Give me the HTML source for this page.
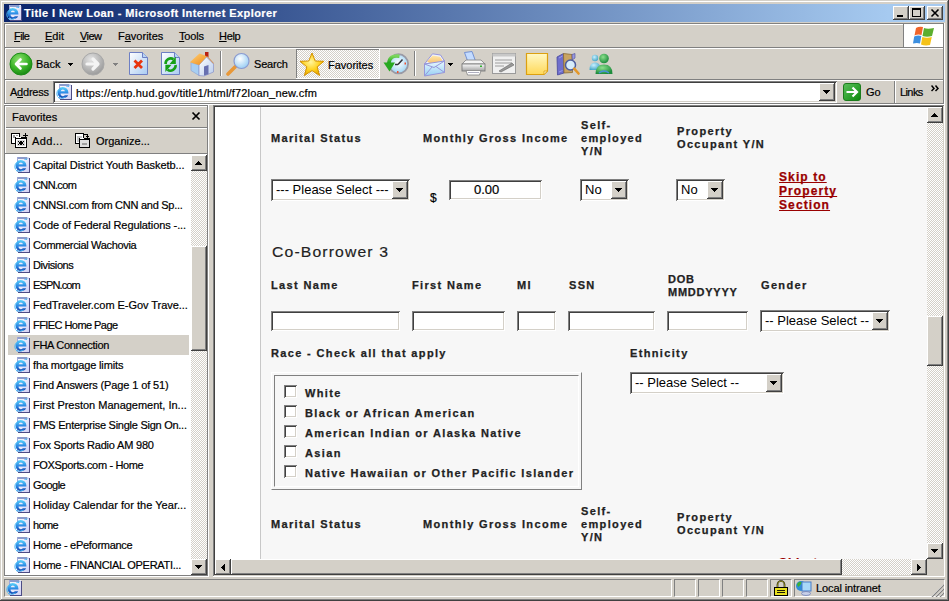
<!DOCTYPE html>
<html><head><meta charset="utf-8">
<style>
*{margin:0;padding:0;box-sizing:border-box}
html,body{width:949px;height:601px;overflow:hidden;background:#D4D0C8;font-family:"Liberation Sans",sans-serif;font-size:11px;color:#000}
.a{position:absolute}
.t{position:absolute;white-space:nowrap;line-height:11px;font-size:11px;-webkit-text-stroke:0.2px currentColor}
.hl{background:#fff}
.sh{background:#808080}
.dk{background:#404040}
.fc{background:#D4D0C8}
.u{text-decoration:underline}
.btn{position:absolute;background:#D4D0C8;box-shadow:inset -1px -1px 0 #404040,inset 1px 1px 0 #fff,inset -2px -2px 0 #808080}
.sunk{position:absolute;background:#fff;box-shadow:inset 1px 1px 0 #808080,inset -1px -1px 0 #fff,inset 2px 2px 0 #404040,inset -2px -2px 0 #D4D0C8}
.dither{background-color:#fff;background-image:linear-gradient(45deg,#D4D0C8 25%,transparent 25%,transparent 75%,#D4D0C8 75%),linear-gradient(45deg,#D4D0C8 25%,transparent 25%,transparent 75%,#D4D0C8 75%);background-size:2px 2px;background-position:0 0,1px 1px}
.lbl{position:absolute;white-space:nowrap;font-weight:bold;font-size:11px;line-height:13px;color:#222;letter-spacing:1.35px;-webkit-text-stroke:0.25px #222}
.sel{position:absolute;background:#fff;box-shadow:inset 1px 1px 0 #808080,inset -1px -1px 0 #fff,inset 2px 2px 0 #404040,inset -2px -2px 0 #D4D0C8;font-size:13px;line-height:16px}
.sel .st{position:absolute;left:5px;top:3px;white-space:nowrap}
.sel .sb{position:absolute;right:2px;top:2px;width:16px;bottom:2px;background:#D4D0C8;box-shadow:inset -1px -1px 0 #404040,inset 1px 1px 0 #fff,inset -2px -2px 0 #808080}
.arr{position:absolute;width:0;height:0;border-left:4px solid transparent;border-right:4px solid transparent;border-top:4px solid #000}
.inp{position:absolute;background:#fff;box-shadow:inset 1px 1px 0 #808080,inset -1px -1px 0 #fff,inset 2px 2px 0 #404040,inset -2px -2px 0 #D4D0C8}
.cb{position:absolute;width:13px;height:13px;background:#fff;box-shadow:inset 1px 1px 0 #808080,inset -1px -1px 0 #fff,inset 2px 2px 0 #404040,inset -2px -2px 0 #D4D0C8}
</style></head><body>
<svg width="0" height="0" style="position:absolute"><defs>
<linearGradient id="iepg" x1="0" y1="0" x2="1" y2="1"><stop offset="0" stop-color="#FFFFFF"/><stop offset="1" stop-color="#D0D0F4"/></linearGradient>
<linearGradient id="iee" x1="0" y1="0" x2="0" y2="1"><stop offset="0" stop-color="#5AD4FA"/><stop offset="0.55" stop-color="#2A86E4"/><stop offset="1" stop-color="#0C3EA8"/></linearGradient>
<symbol id="ieicon" viewBox="0 0 16 16">
<rect x="4" y="1" width="12" height="15" fill="#4C4C84"/>
<rect x="3" y="0" width="12" height="15" fill="url(#iepg)"/>
<rect x="3" y="0" width="10" height="2" fill="#8C9CCC"/>
<path d="M13 0 L15 2 L13 2 Z" fill="#A8C8F0"/>
<rect x="3" y="0" width="1" height="15" fill="#A0A8D8"/>
<path d="M6.8 3 A5.6 5.6 0 1 0 12.2 11.2 H8.8 A2.3 2.3 0 0 1 4.6 9.6 H12.4 V8.4 A5.6 5.6 0 0 0 6.8 3 Z M4.7 7.2 A2.2 2.2 0 0 1 9 7.2 Z" fill="url(#iee)" fill-rule="evenodd"/>
<path d="M1.5 12.5 Q-0.8 7 5 3.8 M2 13.5 Q5.5 15.5 9.5 13 M10.5 2.5 Q12.5 1.2 13 3" stroke="#46B4F4" stroke-width="1" fill="none"/>
</symbol>
</defs></svg>

<!-- window frame -->
<div class="a hl" style="left:1px;top:1px;width:946px;height:1px"></div>
<div class="a hl" style="left:1px;top:1px;width:1px;height:598px"></div>
<div class="a sh" style="left:947px;top:1px;width:1px;height:599px"></div>
<div class="a sh" style="left:1px;top:599px;width:947px;height:1px"></div>
<div class="a dk" style="left:948px;top:0;width:1px;height:601px"></div>
<div class="a dk" style="left:0;top:600px;width:949px;height:1px"></div>

<!-- title bar -->
<div class="a" style="left:4px;top:4px;width:941px;height:18px;background:linear-gradient(to right,#0A246A 0%,#A6CAF0 94%,#A6CAF0 100%)"></div>
<svg class="a" style="left:6px;top:5px" width="16" height="16"><use href="#ieicon"/></svg>
<div id="title" class="t" style="left:24px;top:6px;color:#fff;font-weight:bold;font-size:11px;line-height:14px;letter-spacing:0.42px">Title I New Loan - Microsoft Internet Explorer</div>
<div class="btn" style="left:893px;top:6px;width:16px;height:14px"></div>
<div class="a" style="left:897px;top:15px;width:6px;height:2px;background:#000"></div>
<div class="btn" style="left:909px;top:6px;width:16px;height:14px"></div>
<div class="a" style="left:912px;top:8px;width:9px;height:9px;border:1px solid #000;border-top-width:2px"></div>
<div class="btn" style="left:927px;top:6px;width:16px;height:14px"></div>
<svg class="a" style="left:927px;top:6px" width="16" height="14"><path d="M4.5 3.5 L11.5 10.5 M11.5 3.5 L4.5 10.5" stroke="#000" stroke-width="1.6"/></svg>


<!-- rebar bands -->
<div class="a sh" style="left:4px;top:23px;width:940px;height:1px"></div>
<div class="a hl" style="left:5px;top:24px;width:898px;height:1px"></div>
<div class="a sh" style="left:4px;top:23px;width:1px;height:81px"></div>
<div class="a hl" style="left:5px;top:24px;width:1px;height:80px"></div>
<div class="a sh" style="left:943px;top:23px;width:1px;height:81px"></div>
<div class="a hl" style="left:944px;top:23px;width:1px;height:82px"></div>
<div class="a sh" style="left:5px;top:47px;width:938px;height:1px"></div>
<div class="a hl" style="left:5px;top:48px;width:938px;height:1px"></div>
<div class="a sh" style="left:5px;top:79px;width:938px;height:1px"></div>
<div class="a hl" style="left:5px;top:80px;width:938px;height:1px"></div>
<div class="a sh" style="left:4px;top:103px;width:940px;height:1px"></div>
<div class="a hl" style="left:4px;top:104px;width:941px;height:1px"></div>
<!-- menu -->
<div class="t" style="left:14px;top:31px;letter-spacing:-0.6px"><span class="u">F</span>ile</div>
<div class="t" style="left:45px;top:31px"><span class="u">E</span>dit</div>
<div class="t" style="left:80px;top:31px;letter-spacing:-0.6px"><span class="u">V</span>iew</div>
<div class="t" style="left:118px;top:31px">F<span class="u">a</span>vorites</div>
<div class="t" style="left:179px;top:31px;letter-spacing:-0.2px"><span class="u">T</span>ools</div>
<div class="t" style="left:219px;top:31px;letter-spacing:-0.3px"><span class="u">H</span>elp</div>
<!-- throbber -->
<div class="a sh" style="left:903px;top:24px;width:1px;height:23px"></div>
<div class="a hl" style="left:904px;top:24px;width:39px;height:23px"></div>
<svg class="a" style="left:913px;top:26px" width="22" height="20" viewBox="0 0 22 20">
<path d="M3 2 Q6 0 10 1 L8.5 9 Q5 8 1.5 9.5 Z" fill="#F0642A"/>
<path d="M11 2 Q14.5 3.5 21 2 L19 10 Q14 11.5 9.5 10 Z" fill="#5BAE2E"/>
<path d="M1.2 10.5 Q5 9 8.3 10 L7 17.5 Q4 16.5 0 17.5 Z" fill="#3C8FE0"/>
<path d="M9.3 11 Q14 12.5 18.8 11 L17 19 Q12 20 8 18.5 Z" fill="#F5C218"/>
</svg>
<!-- toolbar -->
<svg class="a" style="left:9px;top:52px" width="24" height="24" viewBox="0 0 24 24">
<defs><radialGradient id="gb" cx="40%" cy="30%" r="70%"><stop offset="0" stop-color="#8EE070"/><stop offset="0.6" stop-color="#3DB52A"/><stop offset="1" stop-color="#1A8A14"/></radialGradient></defs>
<circle cx="12" cy="12" r="11" fill="url(#gb)" stroke="#1C8C18" stroke-width="1"/>
<path d="M17.5 12 H7.5 M11.5 7.5 L7 12 L11.5 16.5" stroke="#fff" stroke-width="2.6" fill="none" stroke-linecap="round" stroke-linejoin="round"/>
</svg>
<div class="t" style="left:36px;top:59px">Back</div>
<svg class="a" style="left:68px;top:63px" width="5" height="3"><path d="M0 0h5v1h-1v1h-1v1h-1v-1h-1v-1h-1z" fill="#000"/></svg>
<svg class="a" style="left:81px;top:52px" width="24" height="24" viewBox="0 0 24 24">
<defs><radialGradient id="gf" cx="40%" cy="30%" r="70%"><stop offset="0" stop-color="#E4E4E4"/><stop offset="1" stop-color="#9C9C9C"/></radialGradient></defs>
<circle cx="12" cy="12" r="11" fill="url(#gf)" stroke="#A8A8A8" stroke-width="1"/>
<path d="M6 12 H16.5 M12 7 L17 12 L12 17" stroke="#F4F4F4" stroke-width="3.2" fill="none" stroke-linecap="round" stroke-linejoin="round"/>
</svg>
<svg class="a" style="left:113px;top:63px" width="5" height="3"><path d="M0 0h5v1h-1v1h-1v1h-1v-1h-1v-1h-1z" fill="#808080"/></svg>
<svg class="a" style="left:128px;top:52px" width="24" height="24" viewBox="0 0 24 24">
<defs><linearGradient id="gp" x1="0" y1="0" x2="1" y2="1"><stop offset="0" stop-color="#fff"/><stop offset="1" stop-color="#A9CBF2"/></linearGradient></defs>
<path d="M1.5 0.5 H14.5 L19.5 5.5 V22.5 H1.5 Z" fill="url(#gp)" stroke="#6D7FC4"/>
<path d="M14.5 0.5 V5.5 H19.5" fill="#B9D4F4" stroke="#6D7FC4"/>
<path d="M6.5 8.5 L14 16 M14 8.5 L6.5 16" stroke="#E8340E" stroke-width="2.8"/>
</svg>
<svg class="a" style="left:160px;top:52px" width="24" height="24" viewBox="0 0 24 24">
<path d="M1.5 0.5 H14.5 L19.5 5.5 V22.5 H1.5 Z" fill="url(#gp)" stroke="#6D7FC4"/>
<path d="M14.5 0.5 V5.5 H19.5" fill="#B9D4F4" stroke="#6D7FC4"/>
<path d="M5.6 12 A5.2 5.2 0 0 1 13.5 7.2" stroke="#16A016" stroke-width="2.6" fill="none"/>
<path d="M15.8 4.6 V12 H9.6 Z" fill="#16A016"/>
<path d="M15.6 13 A5.2 5.2 0 0 1 7.5 17.8" stroke="#16A016" stroke-width="2.6" fill="none"/>
<path d="M5.4 20 V12.8 H11.6 Z" fill="#16A016"/>
</svg>
<svg class="a" style="left:189px;top:51px" width="25" height="26" viewBox="0 0 25 26">
<defs><linearGradient id="roof2" x1="0" y1="0" x2="1" y2="1"><stop offset="0" stop-color="#FFD27A"/><stop offset="1" stop-color="#EE8A18"/></linearGradient>
<linearGradient id="front" x1="0" y1="0" x2="1" y2="1"><stop offset="0" stop-color="#FFFFFF"/><stop offset="1" stop-color="#B8CCEC"/></linearGradient></defs>
<rect x="16" y="1" width="3.5" height="5" fill="#B82010"/>
<path d="M2 11.5 L10 14 V24.5 L2 19.5 Z" fill="#A8CFF2" stroke="#8AA0D0" stroke-width="0.6"/>
<path d="M10 14 L17.5 6 L24.5 13 V21 L15 25 L10 24.5 Z" fill="url(#front)" stroke="#8A92C8" stroke-width="0.7"/>
<path d="M0.8 11.2 L10.5 2.5 L18 5.2 L10 14 Z" fill="url(#roof2)"/>
<path d="M18 5.2 L24.8 12.6" stroke="#D08A50" stroke-width="1"/>
<path d="M15 15.5 L19.5 14 V23.2 L15 24.6 Z" fill="#6870B0"/>
</svg>
<div class="a sh" style="left:220px;top:51px;width:1px;height:25px"></div>
<div class="a hl" style="left:221px;top:51px;width:1px;height:25px"></div>
<svg class="a" style="left:226px;top:52px" width="25" height="25" viewBox="0 0 25 25">
<defs><radialGradient id="lens" cx="40%" cy="35%" r="65%"><stop offset="0" stop-color="#fff"/><stop offset="1" stop-color="#9CCFF4"/></radialGradient></defs>
<path d="M2 22 L9 15" stroke="#E89838" stroke-width="3.6" stroke-linecap="round"/>
<circle cx="15.5" cy="9" r="7.5" fill="url(#lens)" stroke="#8A9AD0" stroke-width="1.2"/>
</svg>
<div class="t" style="left:254px;top:59px;letter-spacing:-0.2px">Search</div>
<!-- favorites pressed -->
<div class="a dither" style="left:297px;top:50px;width:82px;height:28px"></div>
<div class="a sh" style="left:296px;top:49px;width:84px;height:1px"></div>
<div class="a sh" style="left:296px;top:49px;width:1px;height:30px"></div>
<div class="a hl" style="left:379px;top:49px;width:1px;height:30px"></div>
<div class="a hl" style="left:296px;top:78px;width:84px;height:1px"></div>
<svg class="a" style="left:299px;top:52px" width="26" height="25" viewBox="0 0 26 25">
<defs><radialGradient id="star" cx="45%" cy="40%" r="60%"><stop offset="0" stop-color="#FFF5A0"/><stop offset="0.6" stop-color="#FFD21C"/><stop offset="1" stop-color="#E6A500"/></radialGradient></defs>
<path d="M13 1 L16.2 9 L25 9.3 L18.2 14.8 L20.6 23.5 L13 18.6 L5.4 23.5 L7.8 14.8 L1 9.3 L9.8 9 Z" fill="url(#star)" stroke="#D49200" stroke-width="1" stroke-linejoin="round"/>
</svg>
<div class="t" style="left:328px;top:60px">Favorites</div>
<svg class="a" style="left:383px;top:52px" width="26" height="24" viewBox="0 0 26 24">
<defs><radialGradient id="clk" cx="50%" cy="45%" r="55%"><stop offset="0" stop-color="#fff"/><stop offset="1" stop-color="#9ED4F4"/></radialGradient>
<linearGradient id="garr" x1="0" y1="0" x2="0" y2="1"><stop offset="0" stop-color="#7CD85C"/><stop offset="1" stop-color="#189C18"/></linearGradient></defs>
<circle cx="15.5" cy="11.8" r="9.6" fill="url(#clk)" stroke="#9A9AA6" stroke-width="1.8"/>
<path d="M15 12.5 L19.5 7.5 M15 12.5 L12 12.5" stroke="#303038" stroke-width="1.5"/>
<rect x="21.5" y="10.5" width="1.5" height="2" fill="#F05030"/>
<rect x="14" y="19" width="1.5" height="2" fill="#F05030"/>
<path d="M16.5 4.2 Q6.5 2.5 5.8 11.5" stroke="url(#garr)" stroke-width="3.6" fill="none"/>
<path d="M0.5 10.5 H12 L6.5 19.5 Z" fill="#28A820"/>
</svg>
<div class="a sh" style="left:414px;top:51px;width:1px;height:25px"></div>
<div class="a hl" style="left:415px;top:51px;width:1px;height:25px"></div>
<svg class="a" style="left:423px;top:53px" width="23" height="24" viewBox="0 0 23 24">
<defs><linearGradient id="env2" x1="0" y1="0" x2="0" y2="1"><stop offset="0" stop-color="#E8F8FF"/><stop offset="1" stop-color="#98D0F4"/></linearGradient>
<linearGradient id="ppr" x1="0" y1="0" x2="0" y2="1"><stop offset="0" stop-color="#FFE8A8"/><stop offset="1" stop-color="#F4B868"/></linearGradient></defs>
<path d="M1.5 11 L9.5 0.8 L17.5 2 L21.5 8 Z" fill="#EEF2FF" stroke="#9696DA" stroke-width="1"/>
<path d="M4 8.5 L9.5 2.5 L17 3.8 L19.5 7.5 L11 12 Z" fill="url(#ppr)"/>
<path d="M1.5 11 L21.5 8 V19.5 L1.5 23 Z" fill="url(#env2)" stroke="#9696DA" stroke-width="1"/>
<path d="M1.5 11 L11 14.5 L21.5 8 M1.5 23 L9 14 M21.5 19.5 L13 13.5" stroke="#9696DA" stroke-width="1" fill="none"/>
</svg>
<svg class="a" style="left:448px;top:63px" width="5" height="3"><path d="M0 0h5v1h-1v1h-1v1h-1v-1h-1v-1h-1z" fill="#000"/></svg>
<svg class="a" style="left:461px;top:51px" width="25" height="25" viewBox="0 0 25 25">
<defs><linearGradient id="prb" x1="0" y1="0" x2="0" y2="1"><stop offset="0" stop-color="#FAFAFA"/><stop offset="1" stop-color="#A4A4A4"/></linearGradient></defs>
<path d="M3.5 1.5 L11 0.5 L14.5 10 L7 11 Z" fill="#C4DCFF" stroke="#6A8AD0" stroke-width="0.9"/>
<path d="M1 13 L5 9 H20 L24 13 Z" fill="#F4F4F4" stroke="#8A8A8A" stroke-width="0.9"/>
<rect x="1" y="13" width="23" height="7" fill="url(#prb)" stroke="#7A7A7A" stroke-width="0.9"/>
<path d="M5 19.5 H20 L18.5 24 H6.5 Z" fill="#FFFFFF" stroke="#8A8A8A" stroke-width="0.9"/>
<path d="M7 21.5 H18" stroke="#9A9AB0" stroke-width="0.8"/>
<rect x="19" y="14.5" width="2" height="1.5" fill="#30B030"/>
</svg>
<svg class="a" style="left:492px;top:53px" width="25" height="22" viewBox="0 0 25 22">
<rect x="0.5" y="0.5" width="23" height="20" fill="#F0F0F0" stroke="#9A9A9A"/>
<rect x="0.5" y="0.5" width="23" height="3" fill="#C8C8C8"/>
<path d="M3 7 H20 M3 10 H20 M3 13 H12" stroke="#888" stroke-width="0.8"/>
<path d="M7 18 L20 10 L22 12 L9 19 Z" fill="#999" stroke="#666" stroke-width="0.6"/>
</svg>
<svg class="a" style="left:525px;top:52px" width="24" height="24" viewBox="0 0 24 24">
<defs><linearGradient id="note" x1="0" y1="0" x2="0" y2="1"><stop offset="0" stop-color="#FFF8C4"/><stop offset="1" stop-color="#FFD858"/></linearGradient></defs>
<path d="M1.5 1.5 H22.5 V19 L19 22.5 H1.5 Z" fill="url(#note)" stroke="#DCA010" stroke-width="1.2"/>
<path d="M22.5 19 H19 V22.5 Z" fill="#FFF4C0" stroke="#DCA010" stroke-width="0.8"/>
</svg>
<svg class="a" style="left:556px;top:52px" width="24" height="24" viewBox="0 0 24 24">
<path d="M1 5 L7.5 1.5 L8 21 L1.5 23 Z" fill="#6E6ECC" stroke="#46469A" stroke-width="0.8"/>
<path d="M3 6 L6.5 4 M3 20 L6.5 18.5" stroke="#A8A8F0" stroke-width="0.8"/>
<path d="M7.5 1.5 L16 2.5 L16.5 20.5 L8 21 Z" fill="#C9A462" stroke="#8C6C34" stroke-width="0.8"/>
<path d="M16 2.5 L19 1.5 V6 L16.3 8 Z" fill="#9A9ADC" stroke="#46469A" stroke-width="0.6"/>
<circle cx="14.5" cy="13" r="5" fill="#D6ECFA" stroke="#4C5C9C" stroke-width="1.5"/>
<path d="M18.2 16.7 L22.5 21.5" stroke="#E4982A" stroke-width="2.6" stroke-linecap="round"/>
</svg>
<svg class="a" style="left:588px;top:53px" width="26" height="22" viewBox="0 0 26 22">
<defs><radialGradient id="bud" cx="40%" cy="35%" r="65%"><stop offset="0" stop-color="#8CE08C"/><stop offset="1" stop-color="#1E8C3C"/></radialGradient>
<radialGradient id="bud2" cx="40%" cy="35%" r="65%"><stop offset="0" stop-color="#C8F0FF"/><stop offset="1" stop-color="#4AA8C8"/></radialGradient></defs>
<circle cx="7" cy="5" r="3.2" fill="url(#bud2)"/>
<path d="M1.5 17 Q1.5 9.5 7 9.5 Q11 9.5 12 13 L9 17 Z" fill="url(#bud2)"/>
<circle cx="16" cy="5.5" r="4.8" fill="url(#bud)"/>
<path d="M7.5 21 Q7.5 11.5 16 11.5 Q24.5 11.5 24.5 21 Z" fill="url(#bud)"/>
<path d="M11 20 Q16 16 21 20" stroke="#4A90D8" stroke-width="1.5" fill="none"/>
</svg>
<!-- address -->
<div class="t" style="left:10px;top:87px;letter-spacing:-0.23px">A<span class="u">d</span>dress</div>
<div class="sunk" style="left:53px;top:81px;width:784px;height:22px"></div>
<svg class="a" style="left:56px;top:84px" width="16" height="16" viewBox="0 0 16 16"><use href="#ieicon"/></svg>
<div class="t" style="left:76px;top:88px;letter-spacing:0.18px">https://entp.hud.gov/title1/html/f72loan_new.cfm</div>
<div class="btn" style="left:819px;top:83px;width:16px;height:18px"></div>
<svg class="a" style="left:823px;top:90px" width="7" height="4"><path d="M0 0h7v1h-1v1h-1v1h-1v1h-1v-1h-1v-1h-1v-1h-1z" fill="#000"/></svg>
<svg class="a" style="left:843px;top:83px" width="18" height="18" viewBox="0 0 18 18">
<defs><linearGradient id="go" x1="0" y1="0" x2="1" y2="1"><stop offset="0" stop-color="#5CC05C"/><stop offset="1" stop-color="#0A8A0A"/></linearGradient></defs>
<rect x="0.5" y="0.5" width="17" height="17" rx="2.5" fill="url(#go)" stroke="#1C7C1C"/>
<path d="M3.5 9 H13.5 M9.5 4.5 L14 9 L9.5 13.5" stroke="#fff" stroke-width="2.2" fill="none" stroke-linejoin="miter"/>
</svg>
<div class="t" style="left:866px;top:87px">Go</div>
<div class="a sh" style="left:894px;top:81px;width:1px;height:22px"></div>
<div class="a hl" style="left:895px;top:81px;width:1px;height:22px"></div>
<div class="t" style="left:900px;top:87px;letter-spacing:-0.6px">Links</div>
<svg class="a" style="left:931px;top:85px" width="9" height="7" viewBox="0 0 9 7"><path d="M0.5 0.5 L3 3.5 L0.5 6 M4.5 0.5 L7 3.5 L4.5 6" stroke="#000" stroke-width="1.5" fill="none"/></svg>

<!-- favorites panel -->
<div class="a sh" style="left:4px;top:105px;width:204px;height:1px"></div>
<div class="a hl" style="left:5px;top:106px;width:202px;height:1px"></div>
<div class="a sh" style="left:4px;top:105px;width:1px;height:471px"></div>
<div class="a hl" style="left:5px;top:106px;width:1px;height:47px"></div>
<div class="a sh" style="left:207px;top:106px;width:1px;height:470px"></div>
<div class="a hl" style="left:208px;top:105px;width:1px;height:472px"></div>
<div class="a sh" style="left:5px;top:575px;width:203px;height:1px"></div>
<div class="a hl" style="left:4px;top:576px;width:205px;height:1px"></div>
<div class="t" style="left:12px;top:112px">Favorites</div>
<svg class="a" style="left:191px;top:111px" width="10" height="10" viewBox="0 0 10 10"><path d="M1.5 1.5 L8.5 8.5 M8.5 1.5 L1.5 8.5" stroke="#000" stroke-width="1.7"/></svg>
<div class="a sh" style="left:6px;top:127px;width:201px;height:1px"></div>
<div class="a hl" style="left:6px;top:128px;width:201px;height:1px"></div>
<svg class="a" style="left:11px;top:133px" width="17" height="15" viewBox="0 0 17 15" shape-rendering="crispEdges">
<rect x="0" y="0" width="9" height="11" fill="#000"/>
<rect x="1" y="1" width="7" height="9" fill="#fff"/>
<rect x="2" y="2" width="2" height="3" fill="#999"/>
<rect x="5" y="2" width="2" height="1" fill="#999"/>
<rect x="4" y="4" width="12" height="11" fill="#000"/>
<rect x="5" y="6" width="10" height="8" fill="#fff"/>
<rect x="6" y="7" width="8" height="6" fill="#D8D8D8"/>
<rect x="9" y="8" width="2" height="4" fill="#000"/><rect x="8" y="9" width="4" height="2" fill="#000"/>
<rect x="7" y="8" width="1" height="1" fill="#000"/><rect x="12" y="8" width="1" height="1" fill="#000"/><rect x="7" y="11" width="1" height="1" fill="#000"/><rect x="12" y="11" width="1" height="1" fill="#000"/>
<rect x="5" y="4" width="5" height="1" fill="#fff"/>
<rect x="14" y="0" width="1" height="5" fill="#000"/><rect x="12" y="2" width="5" height="1" fill="#000"/>
</svg>
<div class="t" style="left:32px;top:136px;letter-spacing:0.36px">Add...</div>
<svg class="a" style="left:75px;top:133px" width="16" height="15" viewBox="0 0 16 15" shape-rendering="crispEdges">
<rect x="0" y="0" width="9" height="11" fill="#000"/>
<rect x="1" y="1" width="7" height="9" fill="#fff"/>
<rect x="2" y="3" width="5" height="6" fill="#C8C8C8"/>
<rect x="4" y="5" width="11" height="10" fill="#000"/>
<rect x="5" y="7" width="9" height="7" fill="#E0E0E0"/>
<rect x="5" y="5" width="4" height="1" fill="#fff"/>
<rect x="7" y="10" width="5" height="2" fill="#A0A0A0"/>
<rect x="9" y="1" width="3" height="1" fill="#000"/><rect x="12" y="1" width="1" height="2" fill="#000"/>
<rect x="11" y="3" width="3" height="1" fill="#000"/><rect x="12" y="4" width="1" height="1" fill="#000"/>
</svg>
<div class="t" style="left:96px;top:136px">Organize...</div>
<div class="a sh" style="left:5px;top:153px;width:202px;height:1px"></div>
<div class="a hl" style="left:5px;top:154px;width:202px;height:421px"></div>
<div class="a dither" style="left:191px;top:155px;width:16px;height:418px"></div>
<div class="btn" style="left:191px;top:155px;width:16px;height:16px"></div>
<svg class="a" style="left:195px;top:161px" width="7" height="4"><path d="M3 0h1v1h1v1h1v1h1v1h-7v-1h1v-1h1v-1h1z" fill="#000"/></svg>
<div class="btn" style="left:191px;top:246px;width:16px;height:105px"></div>
<div class="btn" style="left:191px;top:559px;width:16px;height:16px"></div>
<svg class="a" style="left:195px;top:565px" width="7" height="4"><path d="M0 0h7v1h-1v1h-1v1h-1v1h-1v-1h-1v-1h-1v-1h-1z" fill="#000"/></svg>
<svg class="a" style="left:14px;top:157px" width="16" height="16"><use href="#ieicon"/></svg>
<div class="t fv" style="left:33px;top:160px;letter-spacing:-0.06px">Capital District Youth Basketb...</div>
<svg class="a" style="left:14px;top:177px" width="16" height="16"><use href="#ieicon"/></svg>
<div class="t fv" style="left:33px;top:180px;letter-spacing:-0.63px">CNN.com</div>
<svg class="a" style="left:14px;top:197px" width="16" height="16"><use href="#ieicon"/></svg>
<div class="t fv" style="left:33px;top:200px;letter-spacing:-0.27px">CNNSI.com from CNN and Sp...</div>
<svg class="a" style="left:14px;top:217px" width="16" height="16"><use href="#ieicon"/></svg>
<div class="t fv" style="left:33px;top:220px;letter-spacing:-0.09px">Code of Federal Regulations -...</div>
<svg class="a" style="left:14px;top:237px" width="16" height="16"><use href="#ieicon"/></svg>
<div class="t fv" style="left:33px;top:240px;letter-spacing:-0.33px">Commercial Wachovia</div>
<svg class="a" style="left:14px;top:257px" width="16" height="16"><use href="#ieicon"/></svg>
<div class="t fv" style="left:33px;top:260px;letter-spacing:-0.4px">Divisions</div>
<svg class="a" style="left:14px;top:277px" width="16" height="16"><use href="#ieicon"/></svg>
<div class="t fv" style="left:33px;top:280px;letter-spacing:-0.86px">ESPN.com</div>
<svg class="a" style="left:14px;top:297px" width="16" height="16"><use href="#ieicon"/></svg>
<div class="t fv" style="left:33px;top:300px;letter-spacing:-0.04px">FedTraveler.com E-Gov Trave...</div>
<svg class="a" style="left:14px;top:317px" width="16" height="16"><use href="#ieicon"/></svg>
<div class="t fv" style="left:33px;top:320px;letter-spacing:-0.56px">FFIEC Home Page</div>
<div class="a fc" style="left:8px;top:335px;width:181px;height:20px"></div>
<svg class="a" style="left:14px;top:337px" width="16" height="16"><use href="#ieicon"/></svg>
<div class="t fv" style="left:33px;top:340px;letter-spacing:-0.29px">FHA Connection</div>
<svg class="a" style="left:14px;top:357px" width="16" height="16"><use href="#ieicon"/></svg>
<div class="t fv" style="left:33px;top:360px;letter-spacing:-0.14px">fha mortgage limits</div>
<svg class="a" style="left:14px;top:377px" width="16" height="16"><use href="#ieicon"/></svg>
<div class="t fv" style="left:33px;top:380px;letter-spacing:-0.12px">Find Answers (Page 1 of 51)</div>
<svg class="a" style="left:14px;top:397px" width="16" height="16"><use href="#ieicon"/></svg>
<div class="t fv" style="left:33px;top:400px;letter-spacing:-0.01px">First Preston Management, In...</div>
<svg class="a" style="left:14px;top:417px" width="16" height="16"><use href="#ieicon"/></svg>
<div class="t fv" style="left:33px;top:420px;letter-spacing:-0.26px">FMS Enterprise Single Sign On...</div>
<svg class="a" style="left:14px;top:437px" width="16" height="16"><use href="#ieicon"/></svg>
<div class="t fv" style="left:33px;top:440px;letter-spacing:-0.2px">Fox Sports Radio AM 980</div>
<svg class="a" style="left:14px;top:457px" width="16" height="16"><use href="#ieicon"/></svg>
<div class="t fv" style="left:33px;top:460px;letter-spacing:-0.35px">FOXSports.com - Home</div>
<svg class="a" style="left:14px;top:477px" width="16" height="16"><use href="#ieicon"/></svg>
<div class="t fv" style="left:33px;top:480px;letter-spacing:-0.56px">Google</div>
<svg class="a" style="left:14px;top:497px" width="16" height="16"><use href="#ieicon"/></svg>
<div class="t fv" style="left:33px;top:500px;letter-spacing:0.03px">Holiday Calendar for the Year...</div>
<svg class="a" style="left:14px;top:517px" width="16" height="16"><use href="#ieicon"/></svg>
<div class="t fv" style="left:33px;top:520px;letter-spacing:-0.61px">home</div>
<svg class="a" style="left:14px;top:537px" width="16" height="16"><use href="#ieicon"/></svg>
<div class="t fv" style="left:33px;top:540px;letter-spacing:-0.29px">Home - ePeformance</div>
<svg class="a" style="left:14px;top:557px" width="16" height="16"><use href="#ieicon"/></svg>
<div class="t fv" style="left:33px;top:560px;letter-spacing:-0.29px">Home - FINANCIAL OPERATI...</div>
<!-- splitter / content frame -->
<div class="a sh" style="left:213px;top:105px;width:732px;height:1px"></div>
<div class="a dk" style="left:214px;top:106px;width:729px;height:1px"></div>
<div class="a sh" style="left:213px;top:105px;width:1px;height:471px"></div>
<div class="a dk" style="left:214px;top:106px;width:1px;height:469px"></div>
<div class="a hl" style="left:944px;top:105px;width:1px;height:472px"></div>
<div class="a hl" style="left:213px;top:576px;width:732px;height:1px"></div>
<div id="page" class="a" style="left:215px;top:107px;width:712px;height:452px;overflow:hidden;background:#fff">
<div class="a" style="left:45px;top:0;width:1px;height:452px;background:#C8C8C8"></div>
<div class="a" style="left:46px;top:1px;width:700px;height:460px;background:#F7F7F7"></div>
<div class="lbl" style="left:56px;top:25px;">Marital Status</div>
<div class="lbl" style="left:208px;top:25px;">Monthly Gross Income</div>
<div class="lbl" style="left:366px;top:12px;">Self-<br>employed<br>Y/N</div>
<div class="lbl" style="left:462px;top:18px;">Property<br>Occupant Y/N</div>
<div class="sel" style="left:56px;top:72px;width:139px;height:22px"><div class="st">--- Please Select ---</div><div class="sb"><svg class="a" style="left:4px;top:7px" width="7" height="4"><path d="M0 0h7v1h-1v1h-1v1h-1v1h-1v-1h-1v-1h-1v-1h-1z" fill="#000"/></svg></div></div>
<div class="t" style="left:215px;top:86px;font-size:12px">$</div>
<div class="inp" style="left:234px;top:73px;width:93px;height:20px"></div>
<div class="t" style="left:259px;top:76px;font-size:13px;line-height:14px">0.00</div>
<div class="sel" style="left:365px;top:72px;width:49px;height:22px"><div class="st">No</div><div class="sb"><svg class="a" style="left:4px;top:7px" width="7" height="4"><path d="M0 0h7v1h-1v1h-1v1h-1v1h-1v-1h-1v-1h-1v-1h-1z" fill="#000"/></svg></div></div>
<div class="sel" style="left:461px;top:72px;width:49px;height:22px"><div class="st">No</div><div class="sb"><svg class="a" style="left:4px;top:7px" width="7" height="4"><path d="M0 0h7v1h-1v1h-1v1h-1v1h-1v-1h-1v-1h-1v-1h-1z" fill="#000"/></svg></div></div>
<div class="lbl skip" style="left:564px;top:63px;font-size:12px;line-height:14px;color:#990000;text-decoration:underline;text-decoration-skip-ink:none;letter-spacing:1.1px;-webkit-text-stroke:0.25px #990000">Skip to<br>Property<br>Section</div>
<div class="lbl cob" style="left:57px;top:137px;font-size:14px;line-height:16px;font-weight:normal;letter-spacing:1px;color:#222;transform:scaleX(1.125);transform-origin:0 0;-webkit-text-stroke:0.15px #222">Co-Borrower 3</div>
<div class="lbl" style="left:56px;top:172px;">Last Name</div>
<div class="lbl" style="left:197px;top:172px;">First Name</div>
<div class="lbl" style="left:302px;top:172px;">MI</div>
<div class="lbl" style="left:354px;top:172px;">SSN</div>
<div class="lbl" style="left:453px;top:166px;letter-spacing:0.75px">DOB<br>MMDDYYYY</div>
<div class="lbl" style="left:546px;top:172px;">Gender</div>
<div class="inp" style="left:56px;top:204px;width:129px;height:20px"></div>
<div class="inp" style="left:197px;top:204px;width:93px;height:20px"></div>
<div class="inp" style="left:302px;top:204px;width:39px;height:20px"></div>
<div class="inp" style="left:353px;top:204px;width:87px;height:20px"></div>
<div class="inp" style="left:452px;top:204px;width:81px;height:20px"></div>
<div class="sel" style="left:545px;top:203px;width:130px;height:22px"><div class="st">-- Please Select --</div><div class="sb"><svg class="a" style="left:4px;top:7px" width="7" height="4"><path d="M0 0h7v1h-1v1h-1v1h-1v1h-1v-1h-1v-1h-1v-1h-1z" fill="#000"/></svg></div></div>
<div class="lbl" style="left:56px;top:240px;">Race - Check all that apply</div>
<div class="lbl" style="left:415px;top:240px;">Ethnicity</div>
<div class="sel" style="left:415px;top:265px;width:154px;height:22px"><div class="st">-- Please Select --</div><div class="sb"><svg class="a" style="left:4px;top:7px" width="7" height="4"><path d="M0 0h7v1h-1v1h-1v1h-1v1h-1v-1h-1v-1h-1v-1h-1z" fill="#000"/></svg></div></div>
<div class="a" style="left:56px;top:265px;width:311px;height:118px;border-top:1px solid #fff;border-left:1px solid #fff;border-right:1px solid #808080;border-bottom:1px solid #808080"></div>
<div class="a" style="left:59px;top:268px;width:305px;height:112px;border-top:1px solid #808080;border-left:1px solid #808080;border-right:1px solid #fff;border-bottom:1px solid #fff"></div>
<div class="cb" style="left:69px;top:278px"></div>
<div class="lbl" style="left:90px;top:280px;">White</div>
<div class="cb" style="left:69px;top:298px"></div>
<div class="lbl" style="left:90px;top:300px;">Black or African American</div>
<div class="cb" style="left:69px;top:318px"></div>
<div class="lbl" style="left:90px;top:320px;">American Indian or Alaska Native</div>
<div class="cb" style="left:69px;top:338px"></div>
<div class="lbl" style="left:90px;top:340px;">Asian</div>
<div class="cb" style="left:69px;top:358px"></div>
<div class="lbl" style="left:90px;top:360px;">Native Hawaiian or Other Pacific Islander</div>
<div class="lbl" style="left:56px;top:411px;">Marital Status</div>
<div class="lbl" style="left:208px;top:411px;">Monthly Gross Income</div>
<div class="lbl" style="left:366px;top:398px;">Self-<br>employed<br>Y/N</div>
<div class="lbl" style="left:462px;top:404px;">Property<br>Occupant Y/N</div>
<div class="lbl skip" style="left:564px;top:449px;font-size:12px;line-height:14px;color:#990000;text-decoration:underline;text-decoration-skip-ink:none;letter-spacing:1.1px;-webkit-text-stroke:0.25px #990000">Skip to<br>Property<br>Section</div>
</div>
<div class="a dither" style="left:927px;top:107px;width:16px;height:452px"></div>
<div class="btn" style="left:927px;top:107px;width:16px;height:16px"></div>
<svg class="a" style="left:931px;top:113px" width="7" height="4"><path d="M3 0h1v1h1v1h1v1h1v1h-7v-1h1v-1h1v-1h1z" fill="#000"/></svg>
<div class="btn" style="left:927px;top:316px;width:16px;height:50px"></div>
<div class="btn" style="left:927px;top:543px;width:16px;height:16px"></div>
<svg class="a" style="left:931px;top:549px" width="7" height="4"><path d="M0 0h7v1h-1v1h-1v1h-1v1h-1v-1h-1v-1h-1v-1h-1z" fill="#000"/></svg>
<div class="a dither" style="left:215px;top:559px;width:712px;height:16px"></div>
<div class="btn" style="left:215px;top:559px;width:16px;height:16px"></div>
<svg class="a" style="left:221px;top:564px" width="4" height="7"><path d="M3 0h1v7h-1v-1h-1v-1h-1v-1h-1v-1h1v-1h1v-1h1z" fill="#000"/></svg>
<div class="btn" style="left:231px;top:559px;width:611px;height:16px"></div>
<div class="btn" style="left:911px;top:559px;width:16px;height:16px"></div>
<svg class="a" style="left:917px;top:564px" width="4" height="7"><path d="M0 0h1v1h1v1h1v1h1v1h-1v1h-1v1h-1v1h-1z" fill="#000"/></svg>
<div class="a fc" style="left:927px;top:559px;width:16px;height:16px"></div>

<div class="a" style="left:4px;top:579px;width:668px;height:18px;border-top:1px solid #808080;border-left:1px solid #808080;border-right:1px solid #fff;border-bottom:1px solid #fff"></div>
<svg class="a" style="left:6px;top:580px" width="16" height="16"><use href="#ieicon"/></svg>
<div class="a" style="left:674px;top:579px;width:22px;height:18px;border-top:1px solid #808080;border-left:1px solid #808080;border-right:1px solid #fff;border-bottom:1px solid #fff"></div>
<div class="a" style="left:698px;top:579px;width:22px;height:18px;border-top:1px solid #808080;border-left:1px solid #808080;border-right:1px solid #fff;border-bottom:1px solid #fff"></div>
<div class="a" style="left:722px;top:579px;width:22px;height:18px;border-top:1px solid #808080;border-left:1px solid #808080;border-right:1px solid #fff;border-bottom:1px solid #fff"></div>
<div class="a" style="left:746px;top:579px;width:22px;height:18px;border-top:1px solid #808080;border-left:1px solid #808080;border-right:1px solid #fff;border-bottom:1px solid #fff"></div>
<div class="a" style="left:770px;top:579px;width:22px;height:18px;border-top:1px solid #808080;border-left:1px solid #808080;border-right:1px solid #fff;border-bottom:1px solid #fff"></div>
<div class="a" style="left:794px;top:579px;width:151px;height:18px;border-top:1px solid #808080;border-left:1px solid #808080;border-right:1px solid #fff;border-bottom:1px solid #fff"></div>
<svg class="a" style="left:774px;top:580px" width="14" height="16" viewBox="0 0 14 16">
<path d="M3.5 7 V4.5 A3.5 3.5 0 0 1 10.5 4.5 V7" stroke="#000" stroke-width="1.6" fill="none"/>
<path d="M3.5 7 V4.5 A3.5 3.5 0 0 1 10.5 4.5 V7" stroke="#E8E030" stroke-width="0.6" fill="none"/>
<rect x="0.5" y="7.5" width="13" height="8" fill="#E8E020" stroke="#000"/>
<path d="M3 10.5 H11 M3 12.5 H11" stroke="#000" stroke-width="0.9"/>
</svg>
<svg class="a" style="left:796px;top:580px" width="16" height="16" viewBox="0 0 16 16">
<circle cx="5" cy="6" r="5" fill="#2E8ED8"/>
<path d="M1 4 Q3 1 6 2 Q5 5 2 7 Z" fill="#3CB030"/>
<rect x="6" y="2" width="9" height="9" fill="#A8D8F8" stroke="#4A7CC8"/>
<ellipse cx="10" cy="13.5" rx="4.5" ry="2" fill="#C8D0E8" stroke="#7080B8" stroke-width="0.8"/>
</svg>
<div class="t" style="left:816px;top:583px;letter-spacing:-0.1px">Local intranet</div>
<svg class="a" style="left:931px;top:584px" width="13" height="13" viewBox="0 0 13 13">
<path d="M12 1 L1 12 M12 5 L5 12 M12 9 L9 12" stroke="#fff" stroke-width="1"/>
<path d="M13 1 L1 13 M13 5 L5 13 M13 9 L9 13" stroke="#808080" stroke-width="1.2"/>
</svg>
</body></html>
